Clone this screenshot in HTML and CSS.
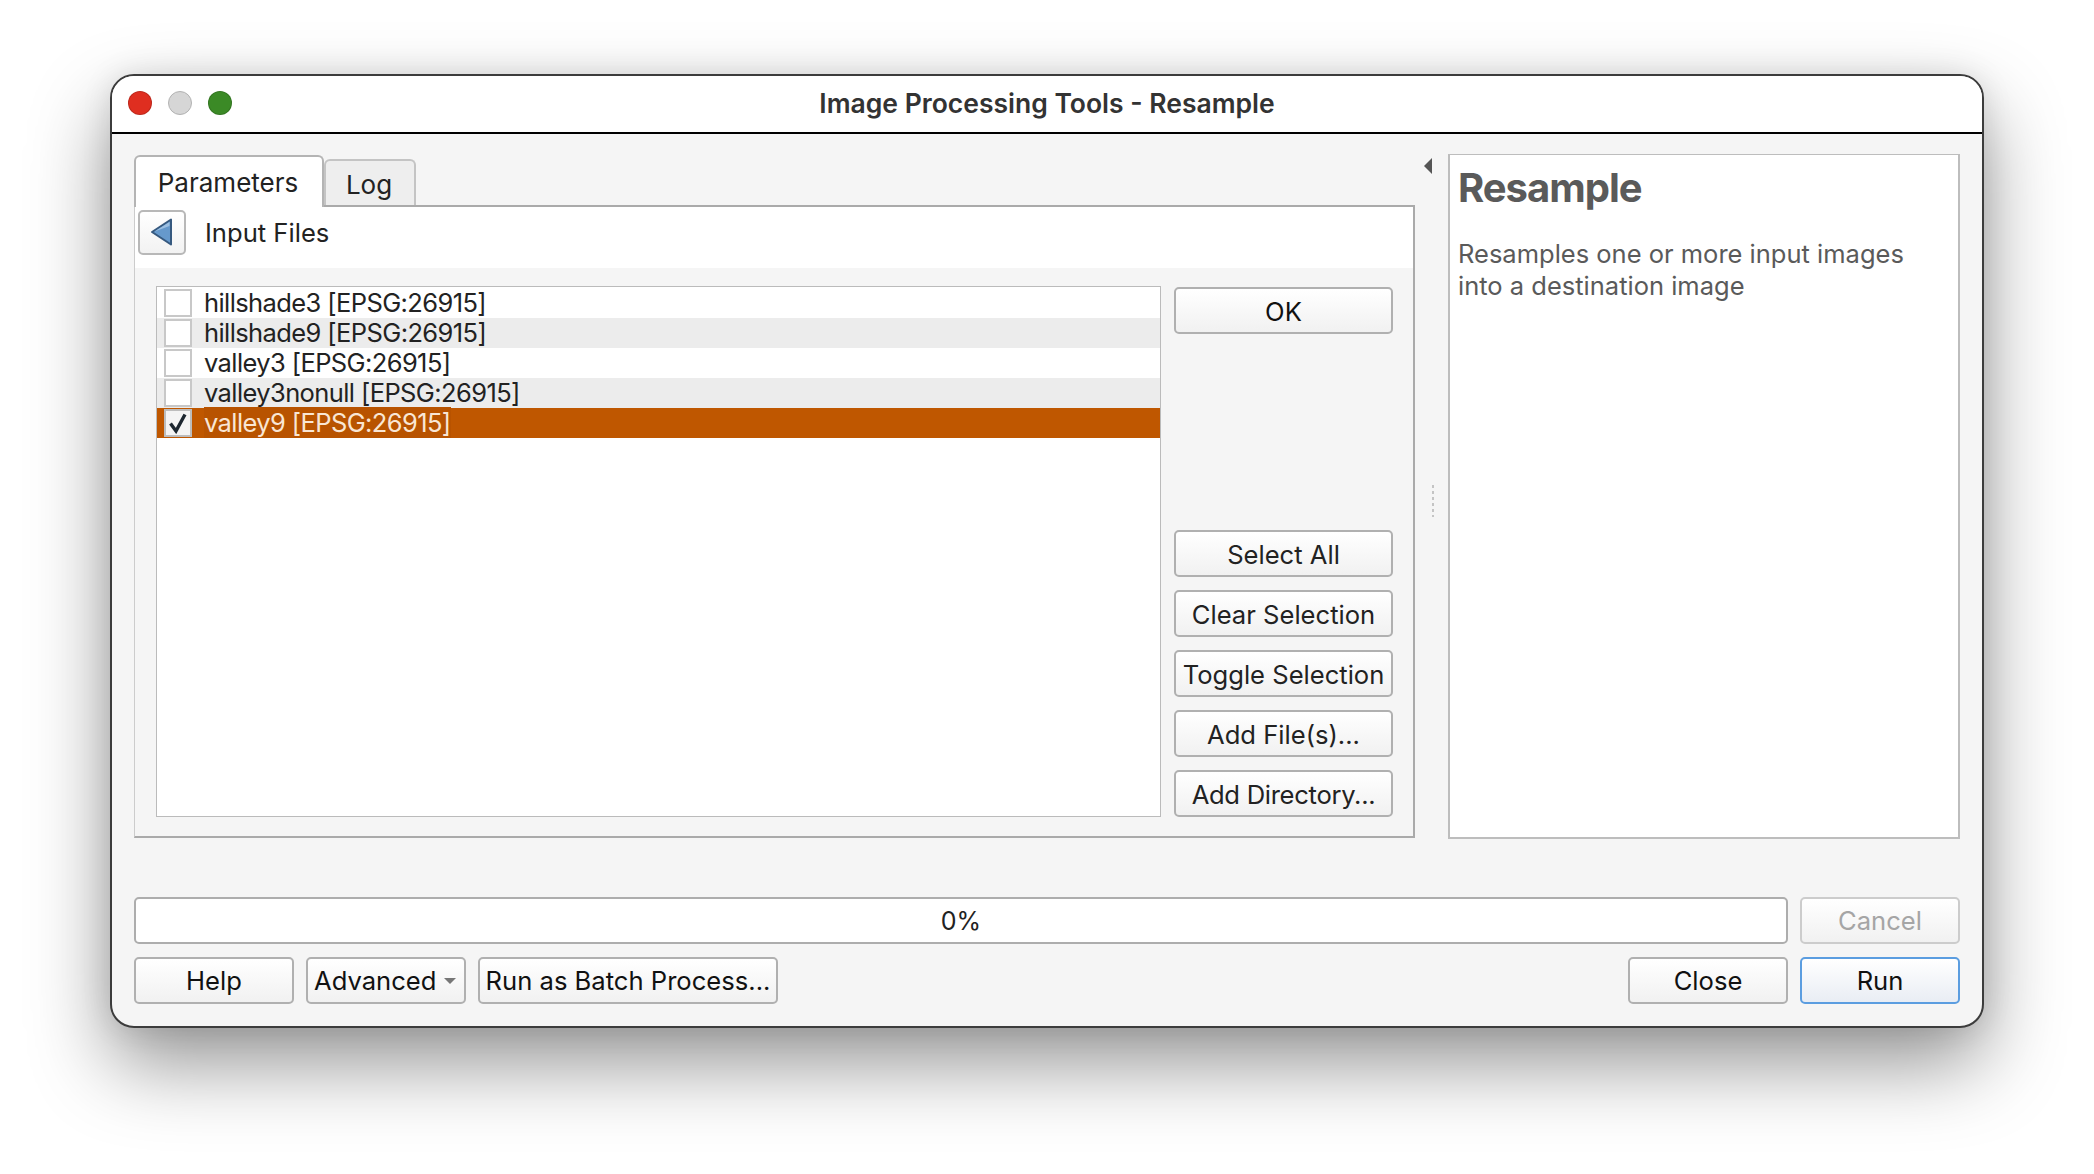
FILE: index.html
```html
<!DOCTYPE html>
<html lang="en">
<head>
    <meta charset="UTF-8">
    <title>Image Processing Tools - Resample</title>
    <link rel="stylesheet" href="styles.css">
</head>
<body>
    <div class="window">
        <header class="titlebar">
            <div class="lights">
                <span class="light red"></span>
                <span class="light grey"></span>
                <span class="light green"></span>
            </div>
            <div class="title">Image Processing Tools - Resample</div>
        </header>
        <main class="content">
            <div class="top-row">
                <section class="left">
                    <div class="tabs">
                        <div class="tab active">Parameters</div>
                        <div class="tab">Log</div>
                    </div>
                    <div class="pane">
                        <div class="pane-head">
                            <button class="back">
                                <svg width="24" height="28" viewBox="0 0 24 28">
                                    <path d="M2 14 L21 1.5 V26.5 Z" fill="#6699cc" stroke="#36597f" stroke-width="2" stroke-linejoin="round"/>
                                    <path d="M4.5 13.5 L19.5 4 V8 Z" fill="#9dc0e2"/>
                                </svg>
                            </button>
                            <span class="pane-label">Input Files</span>
                        </div>
                        <div class="pane-body">
                            <ul class="file-list">
                                <li><span class="check"></span><span class="name">hillshade3 [EPSG:26915]</span></li>
                                <li class="alt"><span class="check"></span><span class="name">hillshade9 [EPSG:26915]</span></li>
                                <li><span class="check"></span><span class="name">valley3 [EPSG:26915]</span></li>
                                <li class="alt"><span class="check"></span><span class="name">valley3nonull [EPSG:26915]</span></li>
                                <li class="selected">
                                    <span class="check on">
                                        <svg width="22" height="22" viewBox="0 0 22 22">
                                            <path d="M3.5 11.5 L9 19 L18 2.5" fill="none" stroke="#1d2730" stroke-width="3.4"/>
                                        </svg>
                                    </span>
                                    <span class="name sel-text">valley9 [EPSG:26915]</span>
                                </li>
                            </ul>
                            <div class="side-buttons">
                                <button class="btn ok">OK</button>
                                <button class="btn">Select All</button>
                                <button class="btn">Clear Selection</button>
                                <button class="btn">Toggle Selection</button>
                                <button class="btn">Add File(s)...</button>
                                <button class="btn tight">Add Directory...</button>
                            </div>
                        </div>
                    </div>
                </section>
                <div class="splitter">
                    <span class="collapse"></span>
                    <span class="grip"></span>
                </div>
                <aside class="help-panel">
                    <h1>Resample</h1>
                    <p>Resamples one or more input images into a destination image</p>
                </aside>
            </div>
            <div class="progress-row">
                <div class="progress">0%</div>
                <button class="btn wide disabled">Cancel</button>
            </div>
            <div class="button-row">
                <button class="btn wide">Help</button>
                <button class="btn wide advanced">Advanced<span class="caret"></span></button>
                <button class="btn batch">Run as Batch Process...</button>
                <div class="spacer"></div>
                <button class="btn wide">Close</button>
                <button class="btn wide run">Run</button>
            </div>
        </main>
    </div>
</body>
</html>
```

FILE: styles.css
```css
* {
    box-sizing: border-box;
}
html, body {
    margin: 0;
    padding: 0;
    background: #ffffff;
    height: 1174px;
    overflow: hidden;
}
body {
    font-family: Inter, "Liberation Sans", sans-serif;
    font-size: 26px;
    color: #222222;
    padding: 74px 0 0 110px;
}
.window {
    width: 1874px;
    height: 954px;
    border: 2px solid #3c3c3c;
    border-radius: 24px;
    background: #f5f5f5;
    overflow: hidden;
    box-shadow: 0 36px 80px rgba(0, 0, 0, 0.42), 0 0 30px rgba(0, 0, 0, 0.1);
}
.titlebar {
    display: grid;
    grid-template-columns: 1fr auto 1fr;
    align-items: center;
    height: 58px;
    padding: 0 16px 2px;
    background: #ffffff;
    border-bottom: 2px solid #000000;
}
.lights {
    display: flex;
    gap: 16px;
}
.light {
    width: 24px;
    height: 24px;
    border-radius: 50%;
    border: 1px solid rgba(0, 0, 0, 0.15);
}
.red { background: #df2e20; }
.grey { background: #d6d6d6; border-color: #b2b2b2; }
.green { background: #3b8a26; }
.title {
    font-size: 26.5px;
    font-weight: 600;
    color: #333333;
}
.content {
    padding: 20px 22px 0;
}
.top-row {
    display: flex;
    height: 685px;
}
.left {
    width: 1281px;
    display: flex;
    flex-direction: column;
    padding-bottom: 1px;
}
.tabs {
    display: flex;
    align-items: flex-end;
    height: 53px;
    margin-bottom: -2px;
}
.tab {
    width: 92px;
    height: 48px;
    padding-right: 2px;
    text-align: center;
    line-height: 48px;
    background: #eeeeee;
    border: 2px solid #c4c4c4;
    border-bottom: 2px solid #aaaaaa;
    border-radius: 6px 6px 0 0;
}
.tab.active {
    width: 190px;
    height: 52px;
    line-height: 52px;
    background: #ffffff;
    border-color: #b4b4b4;
    border-bottom: 0;
    position: relative;
    z-index: 1;
}
.pane {
    flex: 1;
    display: flex;
    flex-direction: column;
    background: #f5f5f5;
    border: 2px solid #aaaaaa;
    border-left: 1px solid #cccccc;
}
.pane-head {
    display: flex;
    align-items: center;
    gap: 19px;
    height: 61px;
    padding: 3px 0 14px 3px;
    background: #ffffff;
}
.pane-label {
    font-size: 25.6px;
}
.back {
    display: flex;
    align-items: center;
    justify-content: center;
    width: 48px;
    height: 45px;
    padding: 0;
    background: linear-gradient(#ffffff, #f2f2f2);
    border: 2px solid #b8b8b8;
    border-radius: 5px;
}
.pane-body {
    flex: 1;
    display: flex;
    gap: 13px;
    padding: 18px 20px 19px 21px;
}
.file-list {
    flex: 1;
    list-style: none;
    margin: 0;
    padding: 1px 0 0;
    font-size: 25.5px;
    letter-spacing: -0.6px;
    background: #ffffff;
    border: 1px solid #bbbbbb;
}
.file-list li {
    display: flex;
    align-items: center;
    gap: 12px;
    height: 30px;
    padding-left: 7px;
}
.file-list .name {
    margin-top: -2px;
}
.file-list li.alt {
    background: #ececec;
}
.file-list li.selected {
    background: #bf5700;
    color: #f9e6d4;
}
.sel-text {
    background: #b85300;
}
.check {
    display: flex;
    align-items: center;
    justify-content: center;
    width: 28px;
    height: 28px;
    flex: none;
    background: #ffffff;
    border: 2px solid #c8c8c8;
}
.check.on {
    background: #f4f4f4;
    border-color: #bdbdbd;
}
.side-buttons {
    width: 219px;
    display: flex;
    flex-direction: column;
    gap: 13px;
    margin-top: 1px;
}
.btn {
    height: 47px;
    padding: 2px 0 0;
    font-family: inherit;
    font-size: 25.6px;
    color: #111111;
    background: linear-gradient(#ffffff, #f1f1f1);
    border: 2px solid #b0b0b0;
    border-radius: 5px;
    white-space: nowrap;
}
.side-buttons .btn {
    color: #222222;
}
.btn.ok {
    margin-bottom: 183px;
    color: #111111;
}
.btn.tight {
    letter-spacing: -0.3px;
}
.splitter {
    width: 33px;
    display: flex;
    flex-direction: column;
    align-items: flex-start;
    padding-top: 4px;
}
.collapse {
    width: 0;
    height: 0;
    margin-left: 9px;
    border-top: 8px solid transparent;
    border-bottom: 8px solid transparent;
    border-right: 8px solid #555555;
}
.grip {
    width: 2px;
    height: 32px;
    margin-top: 311px;
    margin-left: 17px;
    background: repeating-linear-gradient(#c4c4c4 0, #c4c4c4 3px, transparent 3px, transparent 6px);
}
.help-panel {
    flex: 1;
    background: #ffffff;
    border: 2px solid #bdbdbd;
    border-width: 1px 2px 2px 2px;
    padding: 0 20px 0 8px;
    color: #5a5a5a;
}
.help-panel h1 {
    font-size: 40px;
    font-weight: 700;
    margin: 8px 0 25px;
    line-height: 50px;
    letter-spacing: -1px;
}
.help-panel p {
    margin: 0;
    line-height: 32px;
    font-size: 25.5px;
}
.progress-row {
    display: flex;
    gap: 12px;
    margin-top: 58px;
}
.progress {
    flex: 1;
    height: 47px;
    line-height: 45px;
    font-size: 25px;
    text-align: center;
    background: #ffffff;
    border: 2px solid #adadad;
    border-radius: 5px;
}
.progress-row .btn,
.button-row .btn {
    padding-top: 0;
}
.wide {
    width: 160px;
}
.btn.disabled {
    color: #a5a5a5;
    border-color: #cccccc;
}
.button-row {
    display: flex;
    gap: 13px;
    margin-top: 13px;
}
.button-row .advanced {
    display: flex;
    align-items: center;
    justify-content: space-between;
    margin-left: -1px;
    padding: 0 8px 0 6px;
}
.caret {
    width: 0;
    height: 0;
    border-left: 6px solid transparent;
    border-right: 6px solid transparent;
    border-top: 6px solid #777777;
}
.batch {
    width: 300px;
    margin-left: -1px;
}
.spacer {
    flex: 1;
}
.btn.run {
    margin-left: -1px;
    border-color: #5b9de0;
    background: linear-gradient(#ffffff, #e9edf4);
}
```
